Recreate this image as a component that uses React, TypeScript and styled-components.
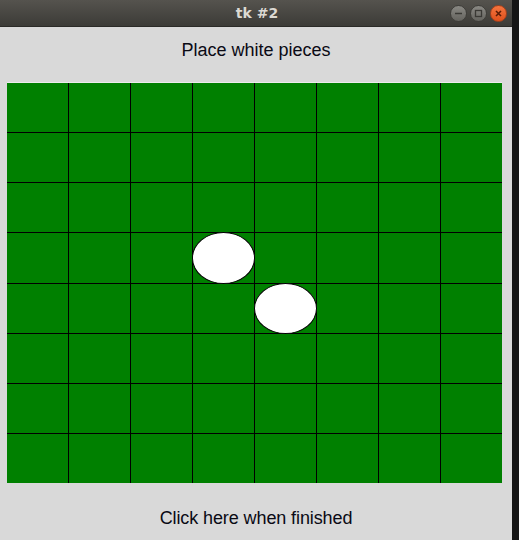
import React from "react";
import styled, { createGlobalStyle } from "styled-components";

const Global = createGlobalStyle`
  html, body { margin: 0; padding: 0; background: #111; }
  body { font-family: "Liberation Sans", Arial, sans-serif; }
`;

const Screen = styled.div`
  display: flex;
  width: 519px;
  height: 540px;
  background: #121212;
`;

const Window = styled.div`
  width: 512px;
  height: 540px;
  display: flex;
  flex-direction: column;
  background: #d9d9d9;
`;

const Strip = styled.div`
  flex: 1;
  background: #151515;
`;

const TitleBar = styled.div`
  position: relative;
  height: 27px;
  flex: 0 0 27px;
  display: flex;
  align-items: center;
  justify-content: center;
  background: linear-gradient(#55534e, #3c3b37);
  border-bottom: 1px solid #2b2a27;
  box-sizing: border-box;
`;

const TitleText = styled.span`
  font-family: "DejaVu Sans", sans-serif;
  font-weight: bold;
  font-size: 14px;
  color: #dcd9d3;
  margin-left: 2px;
`;

const Controls = styled.div`
  position: absolute;
  right: 5px;
  top: 5px;
  display: flex;
  gap: 3px;
`;

const Ctl = styled.div<{ $close?: boolean }>`
  width: 17px;
  height: 17px;
  border-radius: 50%;
  display: flex;
  align-items: center;
  justify-content: center;
  box-sizing: border-box;
  border: 1px solid ${(p) => (p.$close ? "#a8401a" : "#3e3d39")};
  background: ${(p) =>
    p.$close
      ? "linear-gradient(#f4753f, #e0501c)"
      : "linear-gradient(#8a8984, #64635e)"};
`;

const Heading = styled.div`
  height: 56px;
  flex: 0 0 56px;
  box-sizing: border-box;
  padding-bottom: 10px;
  display: flex;
  align-items: center;
  justify-content: center;
  font-size: 18px;
  color: #0a0a14;
`;

const Board = styled.div`
  margin: 0 10px 0 7px;
  width: 495px;
  height: 400px;
  flex: 0 0 400px;
  display: grid;
  grid-template-columns: repeat(8, 1fr);
  grid-template-rows: repeat(8, 1fr);
  gap: 1px;
  background: #000;
  box-shadow: 0 -1px 0 #ececec;
`;

const Cell = styled.div`
  background: #008000;
  display: flex;
  padding: 0;
`;

const Piece = styled.div`
  flex: 1;
  border-radius: 50%;
  background: #fff;
  border: 1px solid #000;
  margin: -1px;
`;

const Footer = styled.div`
  height: 57px;
  flex: 0 0 57px;
  box-sizing: border-box;
  padding-top: 13px;
  display: flex;
  justify-content: center;
  font-size: 18px;
  line-height: 44px;
  letter-spacing: -0.1px;
  color: #0a0a14;
`;

const pieces = new Set(["3-3", "4-4"]);

export default function App() {
  const cells = [];
  for (let r = 0; r < 8; r++) {
    for (let c = 0; c < 8; c++) {
      cells.push(
        <Cell key={`${r}-${c}`}>{pieces.has(`${r}-${c}`) && <Piece />}</Cell>
      );
    }
  }
  return (
    <>
      <Global />
      <Screen>
        <Window>
          <TitleBar>
            <TitleText>tk #2</TitleText>
            <Controls>
              <Ctl>
                <svg width="9" height="9" viewBox="0 0 9 9">
                  <line x1="1" y1="4.5" x2="8" y2="4.5" stroke="#3a3935" strokeWidth="1.5" />
                </svg>
              </Ctl>
              <Ctl>
                <svg width="9" height="9" viewBox="0 0 9 9">
                  <rect x="1.5" y="1.5" width="6" height="6" fill="none" stroke="#3a3935" strokeWidth="1.3" />
                </svg>
              </Ctl>
              <Ctl $close>
                <svg width="9" height="9" viewBox="0 0 9 9">
                  <path d="M2 2 L7 7 M7 2 L2 7" stroke="#5a1c06" strokeWidth="1.6" />
                </svg>
              </Ctl>
            </Controls>
          </TitleBar>
          <Heading>Place white pieces</Heading>
          <Board>{cells}</Board>
          <Footer>Click here when finished</Footer>
        </Window>
        <Strip />
      </Screen>
    </>
  );
}
